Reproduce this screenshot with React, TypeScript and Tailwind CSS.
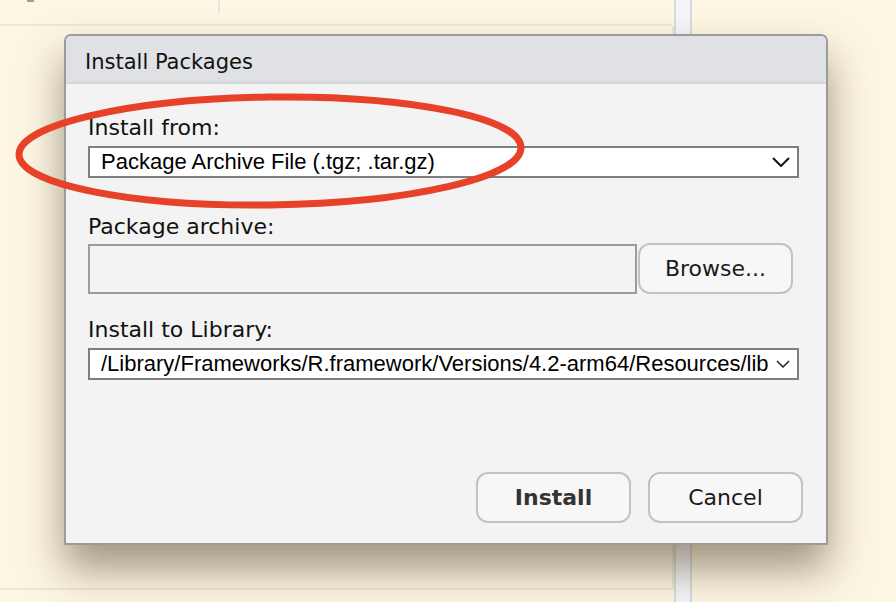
const label = "text-[22px] leading-[26px] text-[#111] font-['DejaVu_Sans',sans-serif]";
const field = "font-['Liberation_Sans',Arial,sans-serif] text-[22px] text-black";

const Combo = ({ text, small }: { text: string; small?: boolean }) => (
  <div className="flex items-center h-[32px] border-2 border-[#7f7f7f] bg-white pl-[11px] pr-[7px]">
    <span className={`${field} flex-1 overflow-hidden whitespace-nowrap leading-[28px]`}>{text}</span>
    {small ? (
      <svg width="14" height="8" viewBox="0 0 14 8" className="ml-[6px] shrink-0">
        <path d="M1 1 L7 7 L13 1" fill="none" stroke="#222" strokeWidth="1.5" />
      </svg>
    ) : (
      <svg width="18" height="10" viewBox="0 0 18 10" className="ml-2 shrink-0">
        <path d="M1 1 L9 9 L17 1" fill="none" stroke="#111" strokeWidth="2" />
      </svg>
    )}
  </div>
);

const Btn = ({ children, bold }: { children: string; bold?: boolean }) => (
  <button
    className={`h-[51px] w-[155px] rounded-[12px] border-2 border-[#c2c2c2] bg-[#f7f7f7] text-[22px] text-[#1a1a1a] font-['DejaVu_Sans',sans-serif] ${bold ? "font-bold text-[#333]" : ""}`}
  >
    {children}
  </button>
);

export default function App() {
  return (
    <div className="relative w-[896px] h-[602px] overflow-hidden bg-[#fdf6e3]">
      {/* editor backdrop */}
      <div className="flex h-full">
        <div className="w-[674px] flex flex-col">
          <div className="h-[24px] flex">
            <div className="w-[218px] relative">
              <div className="absolute left-[27px] top-0 w-[7px] h-[2px] bg-[#9aa0a4]" />
            </div>
            <div className="w-[2px] h-[14px] bg-[#e6e6e4]" />
          </div>
          <div className="h-[2px] bg-[#eee8d5] mr-[2px]" />
          <div className="flex-1 border-r-2 border-[#eee8d5] border-b-2 mb-[12px]" />
        </div>
        <div className="w-[18px] border-x-2 border-[#d9dadd] bg-[#f4f5f8]" />
        <div className="flex-1" />
      </div>

      {/* dialog window */}
      <div className="absolute left-[64px] top-[34px] w-[764px] h-[511px] flex flex-col border-2 border-[#9b9b9b] rounded-t-[7px] bg-[#f2f3f2] shadow-[0_24px_40px_rgba(70,55,30,0.5)]">
        <div className="h-[48px] flex items-center pl-[19px] pt-[7px] bg-[#e0e1e5] rounded-t-[5px] border-b-2 border-[#d3d5d7] text-[21px] text-[#111] font-['DejaVu_Sans',sans-serif]">
          Install Packages
        </div>
        <div className="flex-1 flex flex-col pl-[22px] pr-[27px] pt-[31px] pb-[20px]">
          <div className={label}>Install from:</div>
          <div className="mt-[5px]">
            <Combo text="Package Archive File (.tgz; .tar.gz)" />
          </div>

          <div className={`${label} mt-[36px]`}>Package archive:</div>
          <div className="mt-[3px] flex items-center">
            <div className="w-[549px] h-[50px] border-2 border-[#9c9c9c] bg-[#f2f3f2]" />
            <button className="ml-[1px] h-[51px] w-[155px] rounded-[12px] border-2 border-[#c2c2c2] bg-[#f7f7f7] text-[22px] text-[#1a1a1a] font-['DejaVu_Sans',sans-serif]">
              Browse...
            </button>
          </div>

          <div className={`${label} mt-[23px]`}>Install to Library:</div>
          <div className="mt-[5px]">
            <Combo small text="/Library/Frameworks/R.framework/Versions/4.2-arm64/Resources/lib" />
          </div>

          <div className="flex-1" />
          <div className="flex justify-end gap-[17px] -mr-[4px]">
            <Btn bold>Install</Btn>
            <Btn>Cancel</Btn>
          </div>
        </div>
      </div>

      {/* red annotation ellipse */}
      <svg className="absolute left-0 top-0 pointer-events-none" width="896" height="602" viewBox="0 0 896 602">
        <ellipse cx="270" cy="151" rx="251" ry="54" fill="none" stroke="#e8412a" strokeWidth="7" transform="rotate(-0.8 270 151)" />
      </svg>
    </div>
  );
}
